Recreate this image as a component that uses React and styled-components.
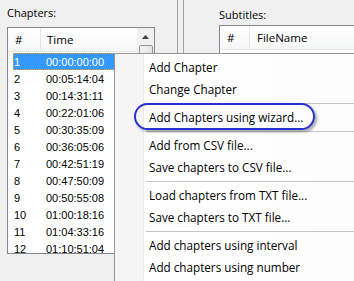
import React from 'react';
import styled, { createGlobalStyle } from 'styled-components';

const GlobalStyle = createGlobalStyle`
  html, body {
    margin: 0;
    padding: 0;
    background: #f0f0f0;
    overflow: hidden;
  }
`;

const Page = styled.div`
  position: relative;
  display: flex;
  width: 354px;
  height: 281px;
  overflow: hidden;
  background: #f0f0f0;
  font-family: 'Open Sans', 'Liberation Sans', sans-serif;
  color: #000;
`;

const Panel = styled.div`
  width: ${(p) => p.width || 'auto'};
  flex: ${(p) => (p.width ? 'none' : '1')};
  padding: ${(p) => p.pad};
  box-sizing: border-box;
  display: flex;
  flex-direction: column;
  min-width: 0;
`;

const Label = styled.div`
  font-size: 11px;
  line-height: 14px;
  height: ${(p) => p.h}px;
  white-space: nowrap;
`;

const Splitter = styled.div`
  width: 7px;
  flex: none;
  box-sizing: border-box;
  border-left: 1px solid #a0a0a0;
  border-right: 1px solid #a0a0a0;
`;

const ListBox = styled.div`
  width: ${(p) => p.width || 'auto'};
  height: ${(p) => p.height || 'auto'};
  flex: ${(p) => (p.width ? 'none' : '1')};
  border: 1px solid #828790;
  background: #fff;
  display: flex;
  overflow: hidden;
  box-sizing: border-box;
  ${(p) => (p.open ? 'border-right: none; margin-right: -40px;' : '')}
`;

const ListBody = styled.div`
  flex: 1;
  min-width: 0;
  display: flex;
  flex-direction: column;
`;

const Header = styled.div`
  display: flex;
  height: 23px;
  flex: none;
  background: linear-gradient(#ffffff, #f6f7f8);
  border-bottom: 1px solid #e5e5e5;
  font-size: 11.5px;
`;

const HeadCell = styled.div`
  width: ${(p) => p.w}px;
  flex: ${(p) => (p.grow ? '1' : 'none')};
  padding-left: ${(p) => p.pl}px;
  box-sizing: border-box;
  display: flex;
  align-items: center;
  border-right: ${(p) => (p.grow ? 'none' : '1px solid #e5e5e5')};
  white-space: nowrap;
`;

const Rows = styled.div`
  padding-top: 1px;
`;

const Row = styled.div`
  display: flex;
  height: 17px;
  align-items: center;
  margin-left: 5px;
  font-family: 'Liberation Sans', Arial, sans-serif;
  font-size: 11px;
  box-sizing: border-box;
  background: ${(p) => (p.selected ? '#3399ff' : 'transparent')};
  color: ${(p) => (p.selected ? '#fff' : '#000')};
  outline: ${(p) => (p.selected ? '1px dotted #ff9d2b' : 'none')};
  outline-offset: -1px;
`;

const Cell = styled.div`
  width: ${(p) => p.w}px;
  padding-left: ${(p) => p.pl}px;
  box-sizing: border-box;
  flex: none;
`;

const ScrollBar = styled.div`
  width: 17px;
  flex: none;
  background: #f0f0f0;
  display: flex;
  flex-direction: column;
  align-items: center;
`;

const ScrollArrow = styled.div`
  height: 17px;
  width: 17px;
  display: flex;
  align-items: center;
  justify-content: center;
`;

const Thumb = styled.div`
  width: 14px;
  height: 60px;
  border: 1px solid #979797;
  border-radius: 2px;
  box-sizing: border-box;
  background: linear-gradient(90deg, #f3f3f3, #e4e4e4);
`;

const Menu = styled.div`
  position: absolute;
  left: 114px;
  top: 53px;
  width: 260px;
  height: 240px;
  box-sizing: border-box;
  border: 1px solid #979797;
  background: linear-gradient(90deg, #f5f5f5 0, #f5f5f5 28px, #ebebeb 28px, #ebebeb 29px, #fff 29px, #fcfcfc 100%);
  box-shadow: 2px 2px 3px rgba(0, 0, 0, 0.25);
  padding: 2px 0;
  font-size: 11.7px;
`;

const MenuItem = styled.div`
  height: 22px;
  line-height: 22px;
  padding-left: 34px;
  white-space: nowrap;
`;

const Separator = styled.div`
  height: 6px;
  margin-left: 31px;
  display: flex;
  align-items: center;
  &::before {
    content: '';
    flex: 1;
    height: 1px;
    background: #c5c5c5;
  }
`;

const Highlight = styled.div`
  position: absolute;
  left: 134px;
  top: 103px;
  width: 181px;
  height: 27px;
  box-sizing: border-box;
  border: 2px solid #2a2fd2;
  border-radius: 14px;
  box-shadow: 2px 2px 3px rgba(0, 0, 0, 0.35);
  pointer-events: none;
`;

const chapters = [
  '00:00:00:00', '00:05:14:04', '00:14:31:11', '00:22:01:06',
  '00:30:35:09', '00:36:05:06', '00:42:51:19', '00:47:50:09',
  '00:50:55:08', '01:00:18:16', '01:04:33:16', '01:10:51:04',
];

const menu = [
  'Add Chapter', 'Change Chapter', '-', 'Add Chapters using wizard...', '-',
  'Add from CSV file...', 'Save chapters to CSV file...', '-',
  'Load chapters from TXT file...', 'Save chapters to TXT file...', '-',
  'Add chapters using interval', 'Add chapters using number',
];

export default function App() {
  return (
    <Page>
      <GlobalStyle />
      <Panel width="177px" pad="6px 0 0 7px">
        <Label h={21}>Chapters:</Label>
        <ListBox width="148px" height="227px">
          <ListBody>
            <Header>
              <HeadCell w={33} pl={7}>#</HeadCell>
              <HeadCell grow pl={6}>Time</HeadCell>
            </Header>
            <Rows>
              {chapters.map((t, i) => (
                <Row key={t} selected={i === 0}>
                  <Cell w={27} pl={1}>{i + 1}</Cell>
                  <Cell w={90} pl={6}>{t}</Cell>
                </Row>
              ))}
            </Rows>
          </ListBody>
          <ScrollBar>
            <ScrollArrow>
              <svg width="7" height="4" viewBox="0 0 7 4">
                <path d="M0 4 L3.5 0 L7 4 Z" fill="#404040" />
              </svg>
            </ScrollArrow>
            <Thumb />
          </ScrollBar>
        </ListBox>
      </Panel>
      <Splitter />
      <Panel pad="8px 0 0 35px">
        <Label h={17}>Subtitles:</Label>
        <ListBox open height="240px">
          <ListBody>
            <Header>
              <HeadCell w={30} pl={7}>#</HeadCell>
              <HeadCell grow pl={7}>FileName</HeadCell>
            </Header>
          </ListBody>
        </ListBox>
      </Panel>
      <Menu>
        {menu.map((m, i) =>
          m === '-' ? <Separator key={i} /> : <MenuItem key={i}>{m}</MenuItem>
        )}
      </Menu>
      <Highlight />
    </Page>
  );
}
